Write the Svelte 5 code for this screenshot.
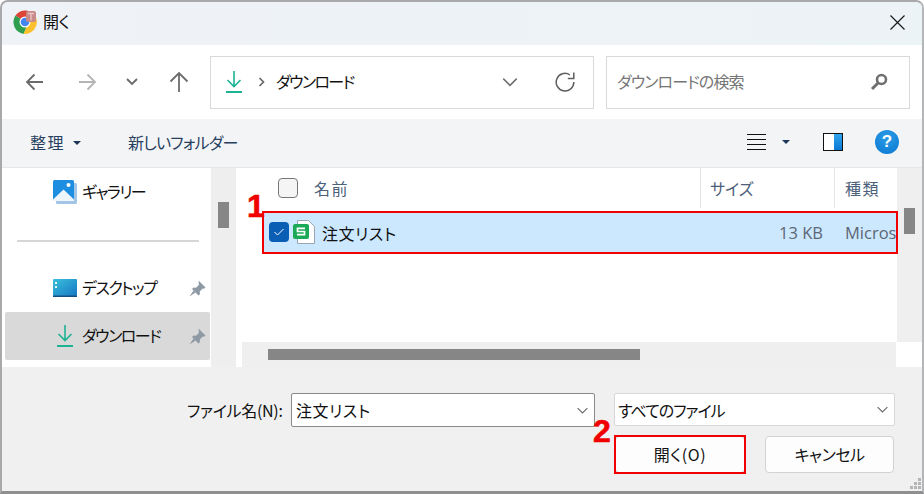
<script lang="ts">
  const sideItems = [
    { label: 'デスクトップ', icon: 'desktop', active: false },
    { label: 'ダウンロード', icon: 'download', active: true }
  ];
</script>

{#snippet downloadIcon()}
  <svg width="18" height="24" viewBox="0 0 18 24" fill="none" stroke="#1db394" stroke-width="1.6" aria-hidden="true">
    <path d="M9 1v15M2.500 10l6.500 6.500L15.500 10"/>
    <path d="M1 22h16" stroke-width="2"/>
  </svg>
{/snippet}

{#snippet pinIcon()}
  <svg class="pin" width="17" height="17" viewBox="0 0 17 17" aria-hidden="true">
    <path d="M9.500 0.500l7 7-1.500 1.200-1.300-.2-3 3 .3 2.500-1.500 1.500-6.500-6.500 1.500-1.500 2.500.3 3-3-.2-1.300z" fill="#8e99a3"/>
    <path d="M4.500 10.500L0.500 16.500l6-4z" fill="#8e99a3"/>
  </svg>
{/snippet}

{#snippet chevron(color: string, w: number)}
  <svg width={w} height={w} viewBox="0 0 16 16" fill="none" stroke={color} stroke-width="1.3" aria-hidden="true">
    <path d="M2 5l6 6 6-6"/>
  </svg>
{/snippet}

<div class="window">
  <header class="titlebar">
    <svg class="chrome" width="24" height="24" viewBox="0 0 24 24" aria-hidden="true">
      <path d="M12 12L2.400 5.500A12 12 0 0 1 23 7.500H12z" fill="#db4437"/>
      <path d="M2.400 5.500A12 12 0 0 0 10.500 23.900L15 14z" fill="#2f9e4f"/>
      <path d="M23 7.500A12 12 0 0 1 10.500 23.900L15 14 12 7.500z" fill="#fbc02d"/>
      <circle cx="12" cy="12" r="5.500" fill="#fff"/>
      <circle cx="12" cy="12" r="4.300" fill="#4285f4"/>
      <rect x="13" y="1" width="10" height="11" rx="2" fill="#c98a8a"/>
      <path d="M15 3.500h6M18 3.500v7" stroke="#ecc2c2" stroke-width="1.400"/>
    </svg>
    <span class="title">開く</span>
    <svg class="close" width="15" height="15" viewBox="0 0 15 15" fill="none" stroke="#1a1a1a" stroke-width="1.200" aria-hidden="true">
      <path d="M0.500 0.500l14 14M14.500 0.500l-14 14"/>
    </svg>
  </header>

  <nav class="navbar">
    <svg class="nav-btn" width="20" height="20" viewBox="0 0 20 20" fill="none" stroke="#6b6b6b" stroke-width="1.800" aria-hidden="true">
      <path d="M18 10H2M9.500 2.500L2 10l7.500 7.500"/>
    </svg>
    <svg class="nav-btn nav-forward" width="20" height="20" viewBox="0 0 20 20" fill="none" stroke="#b4b4b4" stroke-width="1.800" aria-hidden="true">
      <path d="M2 10h16M10.500 2.500L18 10l-7.500 7.500"/>
    </svg>
    <svg class="nav-btn nav-chevron" width="14" height="14" viewBox="0 0 14 14" fill="none" stroke="#6b6b6b" stroke-width="1.900" aria-hidden="true">
      <path d="M2 4l5 5 5-5"/>
    </svg>
    <svg class="nav-btn nav-up" width="20" height="22" viewBox="0 0 20 22" fill="none" stroke="#6b6b6b" stroke-width="1.800" aria-hidden="true">
      <path d="M10 21V2M1.500 10.500L10 2l8.500 8.500"/>
    </svg>

    <div class="address">
      {@render downloadIcon()}
      <svg class="crumb" width="8" height="12" viewBox="0 0 8 12" fill="none" stroke="#666" stroke-width="1.700" aria-hidden="true">
        <path d="M1.500 2l4 4-4 4"/>
      </svg>
      <span class="address-text">ダウンロード</span>
      <span class="chev-wrap">{@render chevron('#6f6f6f', 18)}</span>
      <svg class="refresh" width="20" height="20" viewBox="0 0 20 20" fill="none" stroke="#5f5f5f" stroke-width="1.500" aria-hidden="true">
        <path d="M18.800 10A8.800 8.800 0 1 1 14.800 2.800"/>
        <path d="M18.800 0.500v6h-6"/>
      </svg>
    </div>

    <div class="search">
      <span class="search-text">ダウンロードの検索</span>
      <svg width="18" height="18" viewBox="0 0 18 18" fill="none" aria-hidden="true">
        <circle cx="11.500" cy="6.500" r="4.500" stroke="#6f6f6f" stroke-width="2.600"/>
        <path d="M8 10l-6 6" stroke="#6f6f6f" stroke-width="3"/>
      </svg>
    </div>
  </nav>

  <div class="toolbar">
    <span class="tool-text tool-org">整理</span>
    <span class="caret caret--first"></span>
    <span class="tool-text tool-new">新しいフォルダー</span>
    <div class="tool-right">
      <svg width="20" height="18" viewBox="0 0 20 18" aria-hidden="true">
        <path d="M0 1.500h19M0 6.500h19M0 11.500h19M0 16.500h19" stroke="#111" stroke-width="1"/>
      </svg>
      <span class="caret caret--view"></span>
      <svg class="pane" width="20" height="18" viewBox="0 0 20 18" aria-hidden="true">
        <defs>
          <linearGradient id="paneFill" x1="0" y1="0" x2="0" y2="1">
            <stop offset="0" stop-color="#30a5ec"/>
            <stop offset="1" stop-color="#0c78d4"/>
          </linearGradient>
        </defs>
        <rect x="0.500" y="0.500" width="19" height="17" fill="#fff" stroke="#111"/>
        <rect x="11" y="1" width="8" height="16" fill="url(#paneFill)"/>
      </svg>
      <span class="help">?</span>
    </div>
  </div>

  <main class="content">
    <aside class="sidebar">
      <div class="side-list">
        <div class="side-item side-gallery">
          <svg class="side-icon" width="24" height="24" viewBox="0 0 24 24" aria-hidden="true">
            <rect x="3" y="3" width="21" height="21" rx="1.500" fill="#a4c6e6"/>
            <rect x="0" y="0" width="21" height="21" rx="1.500" fill="#1e8fe0"/>
            <path d="M0 19.500L10.500 9.500 21 19.500V21H0z" fill="#eef6fc"/>
            <circle cx="15.500" cy="5" r="2" fill="#fff"/>
          </svg>
          <span class="side-label">ギャラリー</span>
        </div>
        <div class="side-sep"></div>
        {#each sideItems as item}
          <div class="side-item" class:side-item--active={item.active}>
            {#if item.icon === 'desktop'}
              <svg class="side-icon" width="24" height="18" viewBox="0 0 24 18" aria-hidden="true">
                <defs>
                  <linearGradient id="deskFill" x1="0" y1="0" x2="1" y2="1">
                    <stop offset="0" stop-color="#3cc0dc"/>
                    <stop offset="1" stop-color="#1477c4"/>
                  </linearGradient>
                </defs>
                <rect width="24" height="17" rx="1" fill="url(#deskFill)"/>
                <rect y="16.500" width="24" height="1.500" fill="#14507f"/>
                <path d="M2 3h2v2H2zM2 7h2v2H2z" fill="#e6f7fb"/>
              </svg>
            {:else}
              <span class="side-icon side-icon--dl">{@render downloadIcon()}</span>
            {/if}
            <span class="side-label">{item.label}</span>
            {@render pinIcon()}
          </div>
        {/each}
      </div>
      <div class="side-scroll"><span class="side-thumb"></span></div>
    </aside>

    <section class="files">
      <div class="list-area">
        <div class="list-main">
          <div class="list-head">
            <div class="col col-name">
              <span class="head-check"></span>
              <span class="head-text">名前</span>
            </div>
            <div class="col col-size"><span class="head-text head-text--kana">サイズ</span></div>
            <div class="col col-type"><span class="head-text">種類</span></div>
          </div>
          <div class="row">
            <span class="row-check">
              <svg width="10" height="8" viewBox="0 0 10 8" fill="none" stroke="#fff" stroke-width="1" aria-hidden="true">
                <path d="M0.500 4l3 3 6-6"/>
              </svg>
            </span>
            <svg class="row-icon" width="22" height="24" viewBox="0 0 22 24" aria-hidden="true">
              <path d="M4.500 0.500h11l6 6v17h-17z" fill="#fff" stroke="#9aa7b3"/>
              <rect x="0" y="4" width="16" height="15" rx="2" fill="#1aa956"/>
              <path d="M12 8.300H4.500v3.200h7v3.200H4" fill="none" stroke="#fff" stroke-width="1.700"/>
            </svg>
            <span class="row-name">注文リスト</span>
            <span class="row-size">13 KB</span>
            <span class="row-type">Micros</span>
          </div>
        </div>
        <div class="list-vscroll"><span class="v-thumb"></span></div>
      </div>
      <div class="hscroll-row">
        <div class="hscroll"><span class="h-thumb"></span></div>
        <div class="scroll-corner"></div>
      </div>
    </section>
  </main>

  <footer class="footer">
    <div class="footer-grid">
      <span class="name-label">ファイル名(N):</span>
      <div class="combo combo--name">
        <span>注文リスト</span>
        {@render chevron('#666', 13)}
      </div>
      <div class="combo combo--type">
        <span>すべてのファイル</span>
        {@render chevron('#666', 13)}
      </div>
      <button class="btn btn-open">開く(O)</button>
      <button class="btn btn-cancel">キャンセル</button>
    </div>
    <svg class="grip" width="12" height="12" viewBox="0 0 12 12" fill="#b5b5b5" aria-hidden="true">
      <path d="M8 0h3v3H8zM4 4h3v3H4zM8 4h3v3H8zM0 8h3v3H0zM4 8h3v3H4zM8 8h3v3H8z"/>
    </svg>
  </footer>

  <!-- Red annotations lie over the screenshot -->
  <div class="mark mark-row"></div>
  <div class="mark mark-btn"></div>
  <span class="num num-1">1</span>
  <span class="num num-2">2</span>
</div>

<style>
  :global(body) {
    margin: 0;
    background: #fff;
  }

  .window {
    position: relative;
    width: 924px;
    height: 494px;
    box-sizing: border-box;
    display: flex;
    flex-direction: column;
    border-top: 2px solid #a9a9ab;
    border-left: 2px solid #a9a9ab;
    border-bottom: 3px solid #8f8f8f;
    border-right: 2px solid #b4b6b8;
    border-radius: 8px 8px 0 0;
    overflow: hidden;
    font-family: "Noto Sans CJK JP", "Noto Sans", sans-serif;
    font-feature-settings: "palt";
    color: #111;
    background: #f0f0f0;
  }

  .titlebar {
    height: 43px;
    box-sizing: border-box;
    flex-shrink: 0;
    display: flex;
    align-items: center;
    background: linear-gradient(90deg, #eff2f6, #ecf3f7);
    padding: 0 17px 3px 11px;
  }

  .chrome { margin-right: 6px; }
  .title { font-size: 16px; letter-spacing: -0.3px; margin-bottom: 3px; }
  .close { margin-left: auto; }

  .navbar {
    height: 74px;
    flex-shrink: 0;
    display: flex;
    align-items: center;
    background: #fff;
  }

  .nav-btn { flex-shrink: 0; margin-left: 23px; }
  .nav-forward { margin-left: 32px; }
  .nav-chevron { margin-left: 28px; }
  .nav-up { margin-left: 30px; }

  .address {
    width: 384px;
    height: 53px;
    box-sizing: border-box;
    margin-left: 21px;
    border: 1px solid #d9d9d9;
    display: flex;
    align-items: center;
    padding: 0 12px 0 14px;
    flex-shrink: 0;
  }

  .crumb { margin-left: 15px; }
  .address-text { font-size: 16px; letter-spacing: -1.600px; margin-left: 10px; margin-bottom: 3px; }
  .chev-wrap { margin-left: auto; display: flex; }
  .refresh { margin-left: 36px; margin-right: 6px; }

  .search {
    width: 304px;
    height: 53px;
    box-sizing: border-box;
    margin-left: 12px;
    border: 1px solid #d9d9d9;
    display: flex;
    align-items: center;
    justify-content: space-between;
    padding: 0 21px 0 10px;
    flex-shrink: 0;
  }

  .search-text { font-size: 16px; letter-spacing: -0.9px; color: #767676; margin-bottom: 3px; }

  .toolbar {
    height: 49px;
    flex-shrink: 0;
    box-sizing: border-box;
    border-bottom: 1px solid #e6e7e9;
    background: #f3f4f6;
    display: flex;
    align-items: center;
    padding-left: 28px;
  }

  .tool-text { font-size: 16px; color: #27405e; margin-bottom: 2px; }
  .tool-org { letter-spacing: 1.500px; }
  .tool-new { margin-left: 47px; letter-spacing: -0.8px; }

  .caret {
    width: 0;
    height: 0;
    border-left: 4px solid transparent;
    border-right: 4px solid transparent;
    border-top: 4px solid #1d3557;
  }

  .caret--first { margin-left: 8px; }

  .tool-right {
    margin-left: auto;
    display: flex;
    align-items: center;
    padding-right: 23px;
    padding-bottom: 2px;
  }

  .caret--view { margin-left: 15px; }
  .pane { margin-left: 33px; }

  .help {
    margin-left: 32px;
    width: 24px;
    height: 24px;
    border-radius: 50%;
    background: radial-gradient(circle at 50% 30%, #2a9be6, #0a78d2);
    color: #fff;
    font: bold 17px/24px "Liberation Sans", sans-serif;
    text-align: center;
  }

  .content {
    height: 199px;
    flex-shrink: 0;
    display: flex;
    background: #fff;
  }

  .sidebar {
    width: 234px;
    flex-shrink: 0;
    display: flex;
  }

  .side-list {
    width: 209px;
    padding: 0 1px 0 3px;
    box-sizing: border-box;
    overflow: hidden;
  }

  .side-item {
    height: 48px;
    display: flex;
    align-items: center;
    position: relative;
    border-radius: 2px;
    padding-left: 48px;
  }

  .side-item--active { background: #d9d9d9; }

  .side-icon { flex-shrink: 0; margin-right: 5px; }

  .side-icon--dl {
    display: flex;
    width: 24px;
    justify-content: center;
  }

  .side-label { font-size: 16px; letter-spacing: -1.500px; margin-bottom: 3px; }
  .pin { position: absolute; right: 4px; top: 50%; margin-top: -8px; }

  .side-sep {
    height: 2px;
    margin: 24px 0 22px 12px;
    width: 182px;
    background: #d6d6d6;
  }

  .side-scroll {
    width: 25px;
    background: #eeeeee;
    padding: 34px 7px 0;
    box-sizing: border-box;
  }

  .side-thumb {
    display: block;
    height: 26px;
    background: #868686;
  }

  .files {
    flex: 1;
    min-width: 0;
    display: flex;
    flex-direction: column;
    margin-left: 6px;
  }

  .list-area {
    flex: 1;
    min-height: 0;
    display: flex;
  }

  .list-main {
    width: 655px;
    flex-shrink: 0;
  }

  .list-head {
    height: 41px;
    display: flex;
  }

  .col {
    display: flex;
    align-items: center;
    box-sizing: border-box;
    border-right: 1px solid #e5e5e5;
    height: 40px;
  }

  .col-name { width: 459px; padding-left: 36px; }
  .col-size { width: 134px; padding-left: 9px; }
  .col-type { flex: 1; padding-left: 10px; border-right: none; }

  .head-check {
    width: 20px;
    height: 20px;
    box-sizing: border-box;
    border: 1px solid #777;
    border-radius: 4px;
    background: #f5f5f5;
    margin-right: 16px;
  }

  .head-text { font-size: 16px; color: #4c607a; letter-spacing: 1.500px; margin-bottom: 1px; }
  .head-text--kana { letter-spacing: 0; }

  .row {
    height: 42px;
    margin-top: 2px;
    margin-left: 20px;
    display: flex;
    align-items: center;
    background: #cce8ff;
    overflow: hidden;
    padding-left: 7px;
  }

  .row-check {
    width: 20px;
    height: 20px;
    border-radius: 4px;
    background: #0a5fb4;
    display: flex;
    align-items: center;
    justify-content: center;
    flex-shrink: 0;
  }

  .row-icon { margin-left: 4px; flex-shrink: 0; }
  .row-name { font-size: 16px; margin-left: 7px; margin-top: 1px; width: 439px; flex-shrink: 0; letter-spacing: 0.6px; }
  .row-size { font-size: 16.500px; color: #5c6675; width: 62px; text-align: right; flex-shrink: 0; font-family: "Open Sans", sans-serif; margin-top: 1px; }
  .row-type { font-size: 16.500px; color: #5c6675; margin-left: 22px; font-family: "Open Sans", sans-serif; margin-top: 1px; white-space: nowrap; }

  .list-vscroll {
    flex: 1;
    background: #efefef;
    padding: 40px 7px 0;
    box-sizing: border-box;
  }

  .v-thumb {
    display: block;
    height: 26px;
    width: 11px;
    background: #868686;
  }

  .hscroll-row {
    height: 25px;
    display: flex;
    flex-shrink: 0;
  }

  .hscroll {
    width: 654px;
    flex-shrink: 0;
    background: #efefef;
    padding: 7px 0 7px 26px;
    box-sizing: border-box;
  }

  .h-thumb {
    display: block;
    width: 372px;
    height: 11px;
    background: #868686;
  }

  .scroll-corner { flex: 1; background: #fff; }

  .footer {
    flex: 1;
    position: relative;
    background: #f0f0f0;
  }

  .footer-grid {
    display: grid;
    grid-template-columns: 104px 304px 300px;
    grid-template-rows: 34px 46px;
    margin: 26px 0 0 185px;
    align-items: start;
  }

  .name-label {
    font-size: 16px;
    line-height: 34px;
    letter-spacing: -0.3px;
    white-space: nowrap;
  }

  .combo {
    display: flex;
    align-items: center;
    justify-content: space-between;
    box-sizing: border-box;
    background: #fff;
    font-size: 16px;
    padding: 0 5px 0 4px;
  }

  .combo--name {
    width: 304px;
    height: 34px;
    border: 1px solid #8a8a8a;
    border-radius: 2px;
    letter-spacing: 0.6px;
  }

  .combo--type {
    width: 281px;
    height: 33px;
    margin-left: 19px;
    border: 1px solid #d8d8d8;
    border-radius: 2px;
    letter-spacing: -1px;
    padding-left: 3px;
  }

  .btn {
    grid-row: 2;
    height: 37px;
    box-sizing: border-box;
    font-family: inherit;
    font-feature-settings: inherit;
    font-size: 16px;
    color: #111;
    background: #fdfdfd;
    border: 1px solid #d2d2d2;
    border-radius: 4px;
    margin-top: 9px;
    padding: 0 0 2px;
    letter-spacing: -0.5px;
  }

  .btn-open {
    grid-column: 3;
    width: 130px;
    margin-left: 20px;
    letter-spacing: 0.6px;
  }

  .btn-cancel {
    grid-column: 3;
    width: 129px;
    margin-left: 170px;
  }

  .grip { position: absolute; right: 0; bottom: 1px; }

  .mark {
    position: absolute;
    border: 2px solid #f00000;
    box-sizing: border-box;
    pointer-events: none;
  }

  .mark-row { left: 260px; top: 209px; width: 636px; height: 43px; }
  .mark-btn { left: 612px; top: 433px; width: 132px; height: 39px; }

  .num {
    position: absolute;
    font: bold 32px/32px "Liberation Sans", sans-serif;
    color: #f00000;
    -webkit-text-stroke: 0.6px #f00000;
  }

  .num-1 { left: 245px; top: 188px; }
  .num-2 { left: 591px; top: 413px; }
</style>
